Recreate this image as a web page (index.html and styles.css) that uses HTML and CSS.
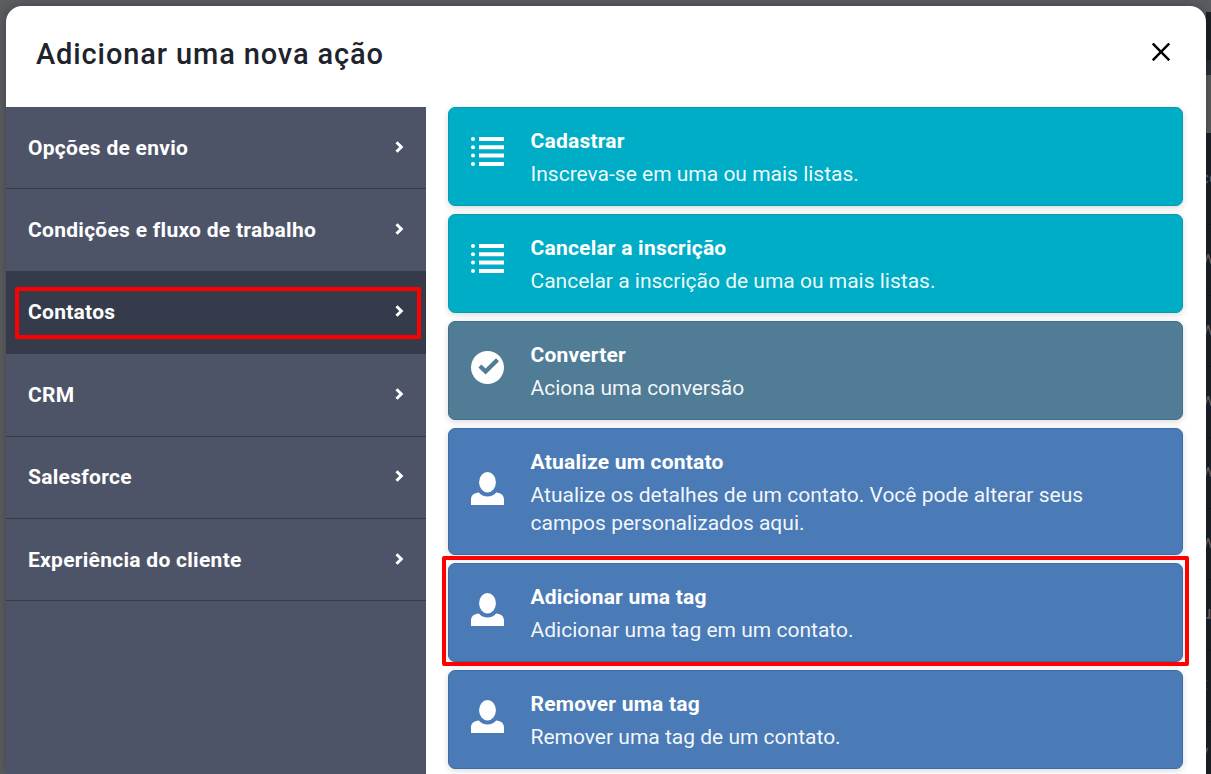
FILE: index.html
```
<!DOCTYPE html>
<html lang="pt-BR">
<head>
  <meta charset="utf-8" />
  <meta name="viewport" content="width=device-width,initial-scale=1" />
  <title>Adicionar uma nova ação</title>
  <link rel="stylesheet" href="styles.css">
</head>
<body>
  <!-- icon sprites -->
  <svg class="sprites" aria-hidden="true">
    <symbol id="i-list" viewBox="0 0 33 33">
      <circle cx="2" cy="2" r="2"/><circle cx="2" cy="10.3" r="2"/><circle cx="2" cy="18.6" r="2"/><circle cx="2" cy="27" r="2"/>
      <path d="M8 0h25v4H8zM8 8.3h25v4H8zM8 16.6h25v4H8zM8 25h25v4H8z"/>
    </symbol>
    <symbol id="i-check" viewBox="0 0 33 33">
      <path fill-rule="evenodd" d="M16.5 0a16.5 16.5 0 1 1 0 33a16.5 16.5 0 0 1 0-33zM25 7.2L14.6 17.6L10.4 13.4L7.4 16.4L14.6 23.6L28 10.2z"/>
    </symbol>
    <symbol id="i-user" viewBox="0 0 33 33">
      <ellipse cx="16.5" cy="10.3" rx="8.4" ry="10.3"/>
      <path d="M0 33v-5.500C0 23.500 3 21 7.800 20.600C10 23.200 13 24.500 16.500 24.500S23 23.200 25.200 20.600C30 21 33 23.500 33 27.500V33z"/>
    </symbol>
    <symbol id="i-chevron" viewBox="0 0 9 12">
      <path d="M1.500 1.200L6.300 6L1.500 10.800" fill="none" stroke="currentColor" stroke-width="3"/>
    </symbol>
  </svg>

  <div class="behind" aria-hidden="true">
    <i class="bar"></i><i class="gap"></i><i class="tool"></i>
    <span class="first">ço</span><span>w</span><span>w</span><span>w</span><span>w</span><span>w</span><span>u</span><span>t</span><span>/</span>
  </div>

  <div class="modal">
    <header>
      <h1>Adicionar uma nova ação</h1>
      <button class="close" aria-label="Fechar">
        <svg width="18" height="18" viewBox="0 0 18 18"><path d="M.7.500L17.300 17.300M17.300.500L.7 17.300" stroke="#000" stroke-width="2.500"/></svg>
      </button>
    </header>

    <div class="content">
      <nav>
        <a><span>Opções de envio</span><svg><use href="#i-chevron"/></svg></a>
        <a><span>Condições e fluxo de trabalho</span><svg><use href="#i-chevron"/></svg></a>
        <a class="active marked"><span>Contatos</span><svg><use href="#i-chevron"/></svg></a>
        <a><span>CRM</span><svg><use href="#i-chevron"/></svg></a>
        <a><span>Salesforce</span><svg><use href="#i-chevron"/></svg></a>
        <a><span>Experiência do cliente</span><svg><use href="#i-chevron"/></svg></a>
      </nav>

      <div class="actions">
        <div class="card teal">
          <svg><use href="#i-list"/></svg>
          <div><h2>Cadastrar</h2><p>Inscreva-se em uma ou mais listas.</p></div>
        </div>
        <div class="card teal">
          <svg><use href="#i-list"/></svg>
          <div><h2>Cancelar a inscrição</h2><p>Cancelar a inscrição de uma ou mais listas.</p></div>
        </div>
        <div class="card slate">
          <svg><use href="#i-check"/></svg>
          <div><h2>Converter</h2><p>Aciona uma conversão</p></div>
        </div>
        <div class="card blue">
          <svg><use href="#i-user"/></svg>
          <div><h2>Atualize um contato</h2><p>Atualize os detalhes de um contato. Você pode alterar seus<br>campos personalizados aqui.</p></div>
        </div>
        <div class="card blue marked">
          <svg><use href="#i-user"/></svg>
          <div><h2>Adicionar uma tag</h2><p>Adicionar uma tag em um contato.</p></div>
        </div>
        <div class="card blue">
          <svg><use href="#i-user"/></svg>
          <div><h2>Remover uma tag</h2><p>Remover uma tag de um contato.</p></div>
        </div>
      </div>
    </div>
  </div>
</body>
</html>
```
FILE: styles.css
```
:root {
  --nav:#4e5468; --nav-dark:#353b4b; --mark:#ff0000;
}
*{box-sizing:border-box;margin:0;padding:0}
body{height:774px;overflow:hidden;position:relative;padding:6px 5px 0 6px;background:#5c5d61;font-family:Roboto,"Noto Sans",sans-serif}
.sprites{position:absolute;width:0;height:0}

/* page under the overlay, only a sliver of it shows */
.behind{position:absolute;top:12px;right:0;bottom:0;width:5px;overflow:hidden;background:#1c2029}
.behind i{display:block}
.behind .bar{height:48px}
.behind .gap{height:15px;background:#2a2e39}
.behind .tool{height:58px;background:#5a5b5d}
.behind span{display:block;height:71px;padding-top:22px;margin-left:-5px;border-bottom:1px solid #151821;font-size:19px;line-height:22px;color:#65676c}
.behind .first{height:92px;padding-top:34px;margin-left:-7px}

.modal{position:relative;height:768px;background:#fff;border-radius:16px 16px 0 0;box-shadow:0 0 12px rgba(0,0,0,.3);overflow:hidden}
header{height:101px;padding:0 36px 6px 30px;display:flex;align-items:center;justify-content:space-between}
h1{font-size:29px;font-weight:500;letter-spacing:.88px;color:#20232c}
.close{display:flex;border:none;background:none;padding:0 0 3px;cursor:pointer}
.content{display:flex;height:667px}

nav{width:420px;flex:none;background:var(--nav)}
nav a{position:relative;display:flex;align-items:center;justify-content:space-between;height:82.4px;padding:0 22px;border-bottom:1px solid var(--nav-dark);color:#fff;font-size:21px;font-weight:700;letter-spacing:.28px}
nav a svg{width:9px;height:12px;margin-bottom:2px}
nav .active{background:var(--nav-dark)}

.actions{flex:1;padding:0 23px 0 22px;display:flex;flex-direction:column;gap:8px}
.card{position:relative;flex:none;display:flex;align-items:center;gap:26.5px;padding:19px 22px 17px;border:1px solid;border-radius:7px;color:#fff;box-shadow:0 2px 6px rgba(0,0,0,.15)}
.card svg{width:33px;height:33px;margin-bottom:8px;flex:none;fill:#fff}
.card h2{font-size:21px;line-height:28px;font-weight:700;letter-spacing:.22px;margin-bottom:5px}
.card p{font-size:21px;line-height:28px;color:rgba(255,255,255,.95)}
.teal{background:#00adc6;border-color:#0899ad}
.slate{background:#507c96;border-color:#446f8b}
.blue{background:#4a7bb6;border-color:#3e6da5}

/* red highlight */
.marked::after{content:"";position:absolute;border:4px solid var(--mark);border-radius:2px;pointer-events:none}
nav .marked::after{inset:15px 5px 14px 9px}
.card.marked::after{inset:-8px -7px -5px -7px}
```
